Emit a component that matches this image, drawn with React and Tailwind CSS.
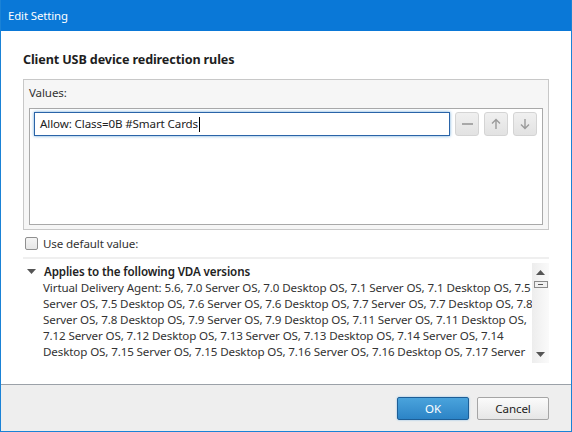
import React from "react";

const lines = [
  "Virtual Delivery Agent: 5.6, 7.0 Server OS, 7.0 Desktop OS, 7.1 Server OS, 7.1 Desktop OS, 7.5",
  "Server OS, 7.5 Desktop OS, 7.6 Server OS, 7.6 Desktop OS, 7.7 Server OS, 7.7 Desktop OS, 7.8",
  "Server OS, 7.8 Desktop OS, 7.9 Server OS, 7.9 Desktop OS, 7.11 Server OS, 7.11 Desktop OS,",
  "7.12 Server OS, 7.12 Desktop OS, 7.13 Server OS, 7.13 Desktop OS, 7.14 Server OS, 7.14",
  "Desktop OS, 7.15 Server OS, 7.15 Desktop OS, 7.16 Server OS, 7.16 Desktop OS, 7.17 Server",
];

function SmallBtn({ children }) {
  return (
    <div className="w-[24px] h-[24px] rounded-[3px] border border-[#d4d4d4] bg-gradient-to-b from-[#f0f0f0] to-[#e2e2e2] flex items-center justify-center">
      {children}
    </div>
  );
}

export default function App() {
  return (
    <div className="w-[572px] h-[432px] flex flex-col font-['Noto_Sans',sans-serif] text-[11.6px] tracking-[-0.12px] text-[#222] bg-white border-x border-b border-[#1a82d6] overflow-hidden">
      <div className="h-[31px] bg-[#0a78d7] -mx-px flex items-center pl-[8px] text-white text-[11.4px]">
        Edit Setting
      </div>
      <div className="flex-1 bg-white flex flex-col px-[22px]">
        <div className="pt-[20px] h-[48px] font-bold text-[12.6px] text-[#1e1e1e] leading-[18px]">
          Client USB device redirection rules
        </div>
        <div className="h-[151px] border border-[#c8c8c8] bg-[#f6f6f6] flex flex-col px-[5px] pb-[4px]">
          <div className="h-[28px] pt-[4px] leading-[18px] text-[#333]">Values:</div>
          <div className="flex-1 bg-white border border-[#a9a9a9] pt-[3px] pl-[4px] flex gap-[5px]">
            <div className="w-[416px] h-[24px] border border-[#2a64a8] shadow-[0_0_3px_#6aa6d8] bg-white flex items-center pl-[5px] text-[#222]">
              <span>Allow: Class=0B #Smart Cards</span>
              <span className="w-px h-[15px] bg-black ml-[1px]" />
            </div>
            <div className="flex gap-[5px]">
              <SmallBtn>
                <div className="w-[11px] h-[2px] bg-[#a8a8a8]" />
              </SmallBtn>
              <SmallBtn>
                <svg width="12" height="12" viewBox="0 0 12 12" fill="none" stroke="#9a9a9a" strokeWidth="1.4">
                  <path d="M6 11V1.5M2 5.5L6 1.5L10 5.5" />
                </svg>
              </SmallBtn>
              <SmallBtn>
                <svg width="12" height="12" viewBox="0 0 12 12" fill="none" stroke="#9a9a9a" strokeWidth="1.4">
                  <path d="M6 1V10.5M2 6.5L6 10.5L10 6.5" />
                </svg>
              </SmallBtn>
            </div>
          </div>
        </div>
        <div className="h-[27px] flex items-center gap-[5px] pl-[2px]">
          <div className="w-[13px] h-[13px] border border-[#8f8f8f] rounded-[2px] bg-gradient-to-b from-[#f4f4f4] to-[#e6e6e6]" />
          <span className="text-[#333]">Use default value:</span>
        </div>
        <div className="h-[2px] bg-[#efefef]" />
        <div className="flex mt-[4px] h-[100px]">
          <div className="flex-1 pl-[4px] pt-[1px] overflow-hidden">
            <div className="flex items-center gap-[8px] h-[16px]">
              <svg width="9" height="6" viewBox="0 0 9 6">
                <path d="M0 0H9L4.5 5Z" fill="#555" />
              </svg>
              <span className="font-semibold text-[#222]">Applies to the following VDA versions</span>
            </div>
            <div className="pl-[16px] leading-[16px] text-[#333]">
              {lines.map((l, i) => (
                <div key={i} className="whitespace-nowrap">{l}</div>
              ))}
            </div>
          </div>
          <div className="w-[17px] bg-gradient-to-r from-[#ededed] to-[#fafafa] flex flex-col items-center">
            <div className="h-[18px] flex items-center justify-center">
              <svg width="9" height="5" viewBox="0 0 9 5"><path d="M0 5H9L4.5 0Z" fill="#555" /></svg>
            </div>
            <div className="w-[14px] h-[7px] border border-[#8a8a8a] bg-[#f0f0f0] flex items-center justify-center">
              <div className="w-[5px] h-px bg-[#555]" />
            </div>
            <div className="flex-1" />
            <div className="h-[18px] flex items-center justify-center">
              <svg width="9" height="5" viewBox="0 0 9 5"><path d="M0 0H9L4.5 5Z" fill="#555" /></svg>
            </div>
          </div>
        </div>
        <div className="flex-1" />
      </div>
      <div className="h-[47px] bg-[#eeeeee] border-t border-[#9ba1a8] flex items-start justify-end gap-[8px] pt-[12px] pr-[22px]">
        <button className="w-[72px] h-[23px] rounded-[2px] border border-[#1d5e96] bg-gradient-to-b from-[#4aa3dc] to-[#2c84c6] text-white shadow-[0_0_2px_#7ab8e6]">
          OK
        </button>
        <button className="w-[72px] h-[23px] rounded-[2px] border border-[#a5a5a5] bg-gradient-to-b from-[#fbfbfb] to-[#e6e6e6] text-[#222]">
          Cancel
        </button>
      </div>
    </div>
  );
}
